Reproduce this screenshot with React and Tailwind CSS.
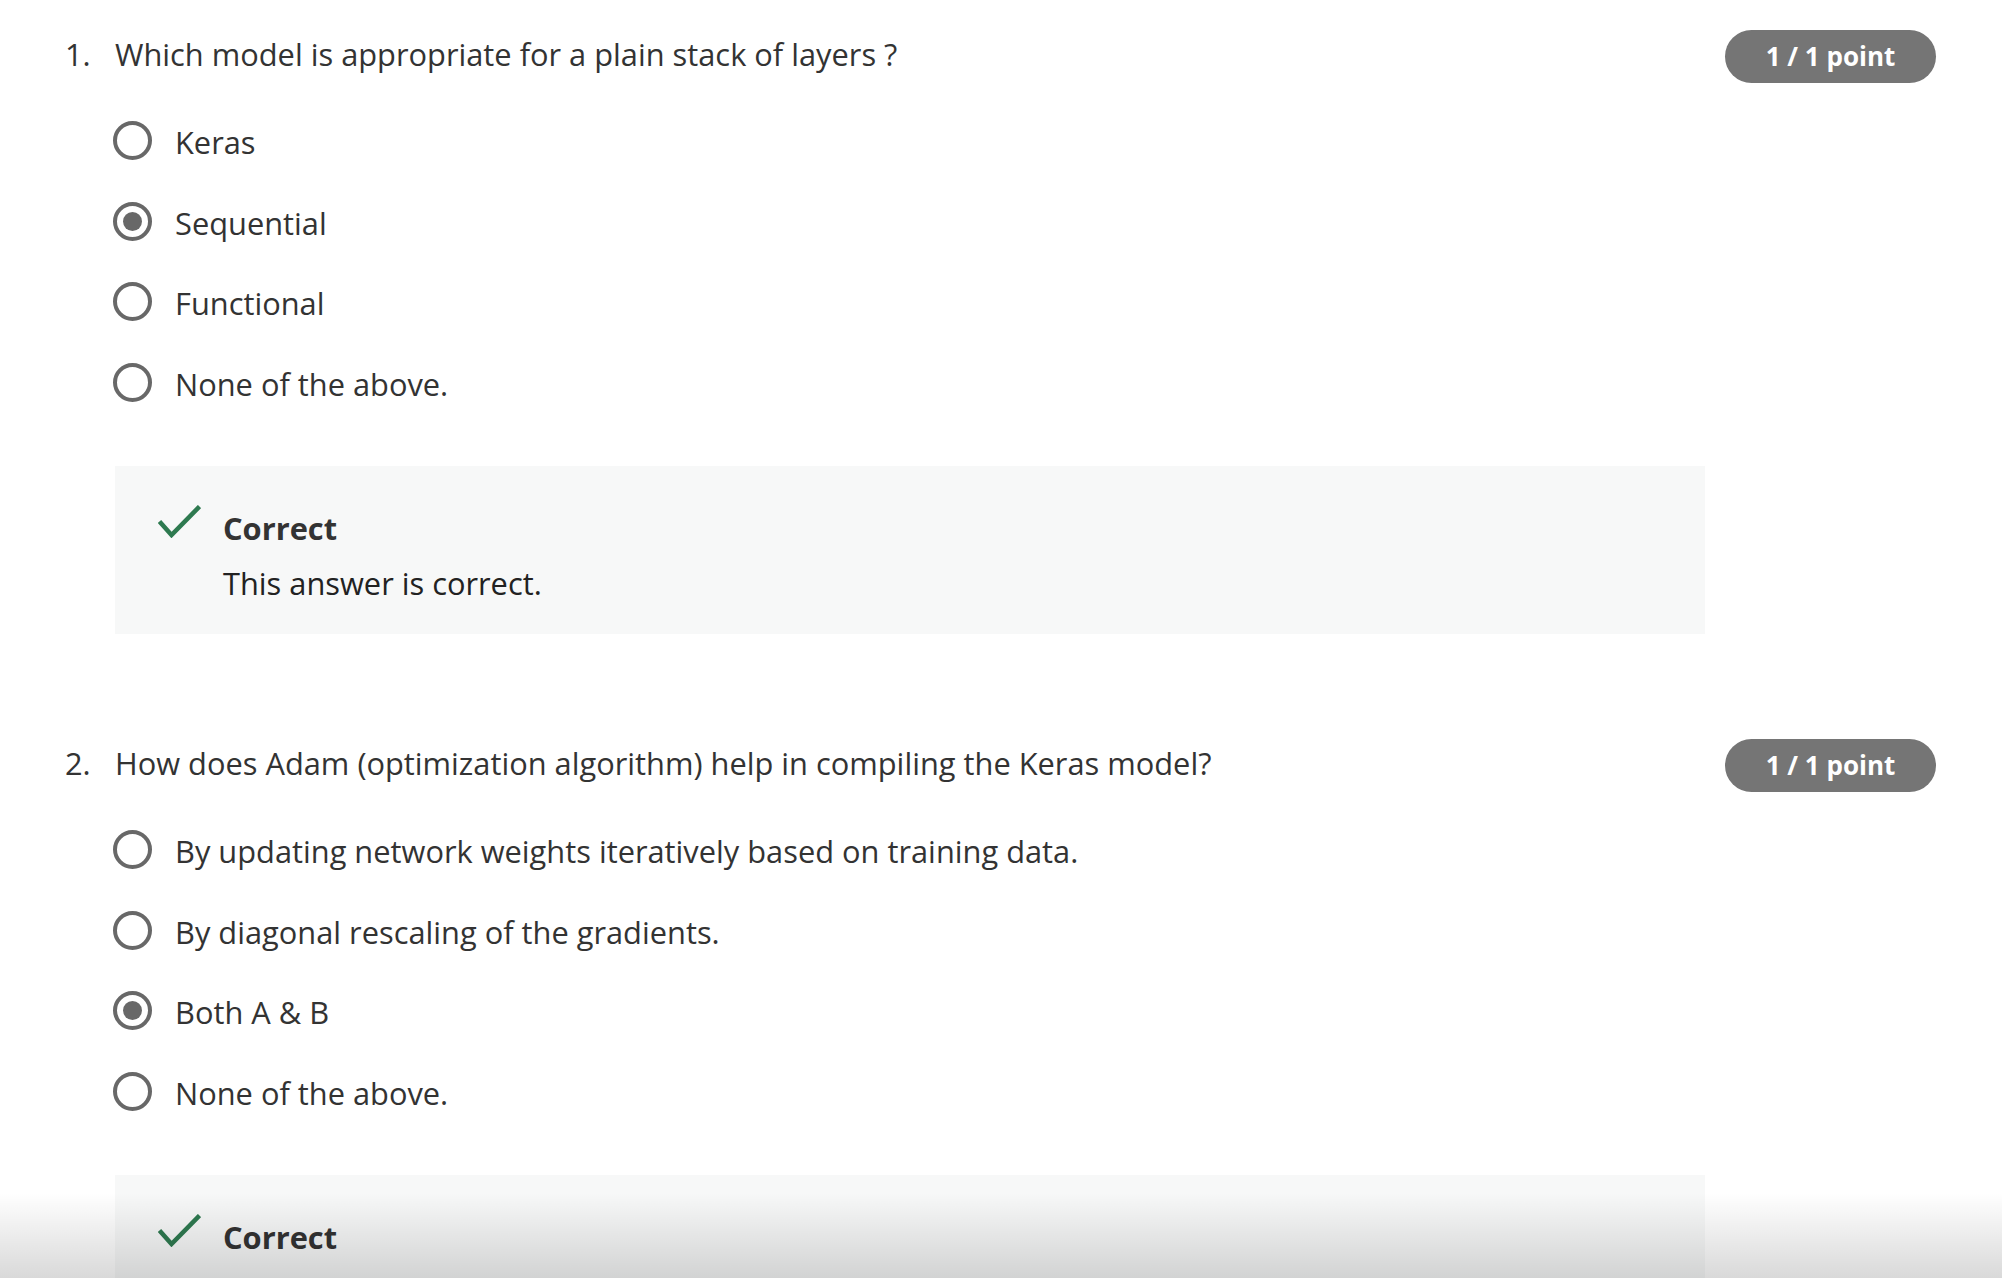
const questions = [
  {
    num: "1.",
    text: "Which model is appropriate for a plain stack of layers ?",
    options: ["Keras", "Sequential", "Functional", "None of the above."],
    selected: 1,
  },
  {
    num: "2.",
    text: "How does Adam (optimization algorithm) help in compiling the Keras model?",
    options: [
      "By updating network weights iteratively based on training data.",
      "By diagonal rescaling of the gradients.",
      "Both A & B",
      "None of the above.",
    ],
    selected: 2,
  },
];

function Radio({ checked }) {
  return (
    <div className="w-[39px] h-[39px] rounded-full border-[4px] border-[#686868] flex items-center justify-center shrink-0 mb-[3px]">
      {checked && <div className="w-[19px] h-[19px] rounded-full bg-[#686868]" />}
    </div>
  );
}

function CheckIcon() {
  return (
    <svg width="43" height="33" viewBox="0 0 43 33" className="shrink-0 -mt-[2px]">
      <polyline
        points="1.5,16.5 13.5,30 41.5,1.5"
        fill="none"
        stroke="#2e7a50"
        strokeWidth="4.5"
      />
    </svg>
  );
}

function Question({ q, first }) {
  return (
    <div className={first ? "pt-[30px]" : "pt-[105px]"}>
      {/* Header row */}
      <div className="flex items-start justify-between">
        <div className="flex text-[30.8px] leading-[48px] text-[#333]">
          <span className="w-[50px] shrink-0">{q.num}</span>
          <span>{q.text}</span>
        </div>
        <div className="w-[211px] h-[53px] rounded-full bg-[#757575] text-white font-bold text-[26px] flex items-center justify-center shrink-0">
          1 / 1 point
        </div>
      </div>

      {/* Options */}
      <div className="mt-[19px] pl-[48px]">
        {q.options.map((opt, i) => (
          <div key={i} className="h-[80.5px] flex items-center gap-[23px]">
            <Radio checked={i === q.selected} />
            <span className="text-[30.8px] leading-[42px] text-[#333]">{opt}</span>
          </div>
        ))}
      </div>

      {/* Feedback */}
      <div className="mt-[42px] ml-[50px] w-[1590px] bg-[#f7f8f8] pl-[43px] pt-[41px] pb-[30px] flex gap-[22px]">
        <CheckIcon />
        <div className="flex flex-col text-[30.8px] leading-[42px]">
          <span className="font-bold text-[#333]">Correct</span>
          <span className="mt-[13px] text-[#222]">This answer is correct.</span>
        </div>
      </div>
    </div>
  );
}

export default function App() {
  return (
    <div className="relative w-[2002px] h-[1278px] overflow-hidden bg-white font-['Open_Sans',sans-serif]">
      <div className="pl-[65px] pr-[66px]">
        {questions.map((q, i) => (
          <Question key={i} q={q} first={i === 0} />
        ))}
      </div>
      <div className="absolute left-0 right-0 bottom-0 h-[85px] bg-gradient-to-b from-black/0 to-black/[0.15]" />
    </div>
  );
}
